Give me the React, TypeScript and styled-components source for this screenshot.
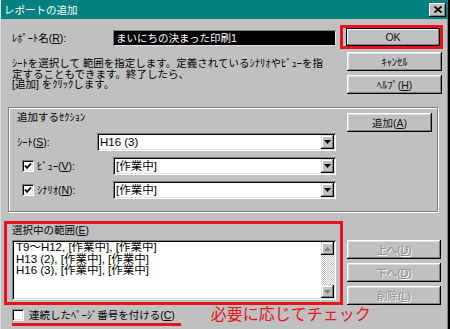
import React from 'react';
import styled, { createGlobalStyle } from 'styled-components';

const FONT = `"Liberation Sans", "Noto Sans CJK JP", sans-serif`;

const GlobalStyle = createGlobalStyle`
  html, body { margin: 0; padding: 0; background: #c0c0c0; }
  body { font-family: ${FONT}; }
  * { box-sizing: border-box; }
`;

const Window = styled.div`
  width: 450px;
  height: 329px;
  overflow: hidden;
  background: #c0c0c0;
  border-left: 1px solid #dfdfdf;
  border-right: 2px solid #000;
  box-shadow: inset -1px 0 #808080;
  display: flex;
  flex-direction: column;
  font-family: ${FONT};
  font-size: 10.5px;
  font-weight: 400;
  color: #000;
`;

const TitleBar = styled.div`
  height: 19px;
  flex: none;
  background: #008080;
  display: flex;
  align-items: center;
  justify-content: space-between;
  padding: 0 2px 0 3px;
`;

const TitleText = styled.span`
  color: #fff;
  font-size: 10.5px;
  line-height: 12px;
  white-space: nowrap;
`;

const CloseButton = styled.div`
  width: 17px;
  height: 14px;
  background: #c0c0c0;
  box-shadow: inset -1px -1px #000, inset 1px 1px #fff, inset -2px -2px #808080;
  display: flex;
  align-items: center;
  justify-content: center;
`;

const Body = styled.div`
  flex: 1;
  display: flex;
  flex-direction: column;
  padding: 0 5px 0 3px;
`;

const TopSection = styled.div`
  display: flex;
  gap: 4px;
  margin-top: 6px;
`;

const TopLeft = styled.div`
  width: 332px;
  padding-left: 8px;
  display: flex;
  flex-direction: column;
`;

const NameRow = styled.div`
  display: flex;
  align-items: center;
  height: 16px;
  margin-top: 5px;
`;

const Label = styled.span<{ $w?: number }>`
  ${(p) => (p.$w ? `width: ${p.$w}px; flex: none;` : '')}
  font-size: 10.5px;
  line-height: 12px;
  white-space: nowrap;
`;

const NameField = styled.div`
  width: 223px;
  height: 16px;
  background: #000;
  color: #fff;
  font-size: 10.5px;
  line-height: 16px;
  padding-left: 3px;
  box-shadow: inset 1px 1px #808080, inset -1px -1px #dfdfdf;
  white-space: nowrap;
  overflow: hidden;
`;

const Description = styled.div`
  margin-top: 12px;
  display: flex;
  flex-direction: column;
`;

const TextLine = styled.div<{ $h: number; $size: number }>`
  height: ${(p) => p.$h}px;
  font-size: ${(p) => p.$size}px;
  line-height: ${(p) => p.$h}px;
  white-space: nowrap;
`;

const ButtonColumn = styled.div<{ $pt?: number; $gap?: number }>`
  display: flex;
  flex-direction: column;
  padding-top: ${(p) => p.$pt ?? 0}px;
  gap: ${(p) => p.$gap ?? 0}px;
`;

const OkFrame = styled.div`
  width: 103px;
  height: 24px;
  border: 3px solid #e5131b;
  padding-left: 3px;
`;

const Button = styled.button<{ $w: number; $h: number; $default?: boolean; $ml?: number; $mt?: number }>`
  width: ${(p) => p.$w}px;
  height: ${(p) => p.$h}px;
  margin-left: ${(p) => p.$ml ?? 0}px;
  margin-top: ${(p) => p.$mt ?? 0}px;
  flex: none;
  padding: 0;
  border: none;
  background: #c0c0c0;
  font-family: ${FONT};
  font-size: 10.5px;
  font-weight: 400;
  line-height: 12px;
  color: #111;
  box-shadow: ${(p) =>
    p.$default
      ? 'inset 0 0 0 1px #000, inset -2px -2px #808080, inset 2px 2px #fff'
      : 'inset -1px -1px #000, inset 1px 1px #fff, inset -2px -2px #808080, inset 2px 2px #dfdfdf'};
  &:disabled {
    color: #8a8a8a;
    text-shadow: 1px 1px #fff;
  }
`;

const GroupBox = styled.div`
  margin: 13px 5px 0 4px;
  border: 1px solid #808080;
  box-shadow: inset 1px 1px #fff, 1px 1px #fff;
  padding: 3px 5px 12px 8px;
  display: flex;
  align-items: flex-start;
  gap: 11px;
`;

const GroupLeft = styled.div`
  width: 319px;
  display: flex;
  flex-direction: column;
`;

const GroupTitle = styled.div`
  font-size: 10.5px;
  line-height: 12px;
  height: 12px;
  white-space: nowrap;
`;

const FieldRow = styled.div<{ $labelW: number; $mt: number }>`
  display: grid;
  grid-template-columns: ${(p) => p.$labelW}px 1fr;
  align-items: center;
  height: 18px;
  margin-top: ${(p) => p.$mt}px;
`;

const CheckLabel = styled.div`
  display: flex;
  align-items: center;
  gap: 3px;
  padding-left: 5px;
`;

const CheckBox = styled.div<{ $size: number }>`
  width: ${(p) => p.$size}px;
  height: ${(p) => p.$size}px;
  flex: none;
  background: #fff;
  box-shadow: inset 1px 1px #808080, inset -1px -1px #fff, inset 2px 2px #000, inset -2px -2px #dfdfdf;
  display: flex;
  align-items: center;
  justify-content: center;
`;

const Combo = styled.div`
  height: 18px;
  background: #fff;
  box-shadow: inset 1px 1px #808080, inset -1px -1px #fff, inset 2px 2px #000, inset -2px -2px #dfdfdf;
  display: flex;
  align-items: center;
`;

const ComboText = styled.span`
  flex: 1;
  padding-left: 3px;
  font-size: 11.5px;
  line-height: 14px;
  white-space: nowrap;
`;

const ArrowButton = styled.div`
  width: 13px;
  height: 14px;
  margin-right: 2px;
  background: #c0c0c0;
  box-shadow: inset -1px -1px #000, inset 1px 1px #dfdfdf, inset -2px -2px #808080, inset 2px 2px #fff;
  display: flex;
  align-items: center;
  justify-content: center;
`;

const BottomSection = styled.div`
  display: flex;
  gap: 4px;
  margin-top: 9px;
`;

const RedFrame = styled.div`
  width: 339px;
  border: 3px solid #e5131b;
  padding: 0 4px 1px 5px;
  display: flex;
  flex-direction: column;
`;

const ListBox = styled.div`
  margin-top: 4px;
  height: 60px;
  background: #fff;
  box-shadow: inset 1px 1px #808080, inset -1px -1px #fff, inset 2px 2px #000, inset -2px -2px #dfdfdf;
  display: flex;
  padding: 2px;
`;

const ListItems = styled.div`
  flex: 1;
  padding: 0 0 0 2px;
  display: flex;
  flex-direction: column;
`;

const ScrollBar = styled.div`
  width: 13px;
  display: flex;
  flex-direction: column;
  justify-content: space-between;
  background-color: #e3e3e3;
  background-image: repeating-conic-gradient(#c0c0c0 0 25%, #ffffff 0 50%);
  background-size: 2px 2px;
`;

const ScrollArrow = styled.div`
  height: 13px;
  background: #c0c0c0;
  box-shadow: inset -1px -1px #000, inset 1px 1px #dfdfdf, inset -2px -2px #808080, inset 2px 2px #fff;
  display: flex;
  align-items: center;
  justify-content: center;
`;

const Footer = styled.div`
  display: flex;
  align-items: flex-start;
`;

const FooterCheck = styled.div`
  margin-left: 8px;
  display: flex;
  align-items: center;
  gap: 5px;
  padding: 4px 6px 2px 0;
  border-bottom: 3px solid #e5131b;
`;

const Note = styled.span`
  margin-left: 30px;
  margin-top: 0px;
  color: #e5131b;
  font-size: 16px;
  line-height: 20px;
  white-space: nowrap;
`;

const Check = () => (
  <svg width="8" height="8" viewBox="0 0 8 8">
    <polyline points="1,3.5 3,5.8 7,1.5" fill="none" stroke="#000" strokeWidth="1.8" />
  </svg>
);

const DownTri = ({ color = '#000' }: { color?: string }) => (
  <svg width="7" height="4" viewBox="0 0 7 4">
    <polygon points="0,0 7,0 3.5,4" fill={color} />
  </svg>
);

const UpTri = ({ color = '#000' }: { color?: string }) => (
  <svg width="7" height="4" viewBox="0 0 7 4">
    <polygon points="0,4 7,4 3.5,0" fill={color} />
  </svg>
);

const CloseX = () => (
  <svg width="8" height="7" viewBox="0 0 8 7">
    <path d="M0.5 0.5 L7.5 6.5 M7.5 0.5 L0.5 6.5" stroke="#000" strokeWidth="1.8" />
  </svg>
);

const descLines = [
  'ｼｰﾄを選択して 範囲を指定します。定義されているｼﾅﾘｵやﾋﾞｭｰを指',
  '定することもできます。終了したら、',
  '[追加] をｸﾘｯｸします。',
];

const listLines = [
  'T9～H12, [作業中], [作業中]',
  'H13 (2), [作業中], [作業中]',
  'H16 (3), [作業中], [作業中]',
];

export default function App() {
  return (
    <>
      <GlobalStyle />
      <Window>
        <TitleBar>
          <TitleText>レポートの追加</TitleText>
          <CloseButton>
            <CloseX />
          </CloseButton>
        </TitleBar>
        <Body>
          <TopSection>
            <TopLeft>
              <NameRow>
                <Label $w={101}>
                  ﾚﾎﾟｰﾄ名(<u>R</u>):
                </Label>
                <NameField>まいにちの決まった印刷1</NameField>
              </NameRow>
              <Description>
                {descLines.map((l) => (
                  <TextLine key={l} $h={10.5} $size={10.5}>
                    {l}
                  </TextLine>
                ))}
              </Description>
            </TopLeft>
            <ButtonColumn>
              <OkFrame>
                <Button $w={94} $h={18} $default>
                  OK
                </Button>
              </OkFrame>
              <Button $w={95} $h={19} $ml={7} $mt={3}>
                ｷｬﾝｾﾙ
              </Button>
              <Button $w={95} $h={19} $ml={7} $mt={4}>
                ﾍﾙﾌﾟ(<u>H</u>)
              </Button>
            </ButtonColumn>
          </TopSection>

          <GroupBox>
            <GroupLeft>
              <GroupTitle>追加するｾｸｼｮﾝ</GroupTitle>
              <FieldRow $labelW={80} $mt={10}>
                <Label>
                  ｼｰﾄ(<u>S</u>):
                </Label>
                <Combo>
                  <ComboText>H16 (3)</ComboText>
                  <ArrowButton>
                    <DownTri />
                  </ArrowButton>
                </Combo>
              </FieldRow>
              <FieldRow $labelW={96} $mt={6}>
                <CheckLabel>
                  <CheckBox $size={12}>
                    <Check />
                  </CheckBox>
                  <Label>
                    ﾋﾞｭｰ(<u>V</u>):
                  </Label>
                </CheckLabel>
                <Combo>
                  <ComboText>[作業中]</ComboText>
                  <ArrowButton>
                    <DownTri />
                  </ArrowButton>
                </Combo>
              </FieldRow>
              <FieldRow $labelW={96} $mt={6}>
                <CheckLabel>
                  <CheckBox $size={12}>
                    <Check />
                  </CheckBox>
                  <Label>
                    ｼﾅﾘｵ(<u>N</u>):
                  </Label>
                </CheckLabel>
                <Combo>
                  <ComboText>[作業中]</ComboText>
                  <ArrowButton>
                    <DownTri />
                  </ArrowButton>
                </Combo>
              </FieldRow>
            </GroupLeft>
            <Button $w={85} $h={19} $mt={2}>
              追加(<u>A</u>)
            </Button>
          </GroupBox>

          <BottomSection>
            <RedFrame>
              <Label>
                選択中の範囲(<u>E</u>)
              </Label>
              <ListBox>
                <ListItems>
                  {listLines.map((l) => (
                    <TextLine key={l} $h={11.5} $size={11.5}>
                      {l}
                    </TextLine>
                  ))}
                </ListItems>
                <ScrollBar>
                  <ScrollArrow>
                    <UpTri color="#808080" />
                  </ScrollArrow>
                  <ScrollArrow>
                    <DownTri color="#808080" />
                  </ScrollArrow>
                </ScrollBar>
              </ListBox>
            </RedFrame>
            <ButtonColumn $pt={19} $gap={4}>
              <Button $w={94} $h={19} disabled>
                上へ(<u>U</u>)
              </Button>
              <Button $w={94} $h={19} disabled>
                下へ(<u>D</u>)
              </Button>
              <Button $w={94} $h={19} disabled>
                削除(<u>L</u>)
              </Button>
            </ButtonColumn>
          </BottomSection>

          <Footer>
            <FooterCheck>
              <CheckBox $size={12} />
              <Label>
                連続したﾍﾟｰｼﾞ番号を付ける(<u>C</u>)
              </Label>
            </FooterCheck>
            <Note>必要に応じてチェック</Note>
          </Footer>
        </Body>
      </Window>
    </>
  );
}
